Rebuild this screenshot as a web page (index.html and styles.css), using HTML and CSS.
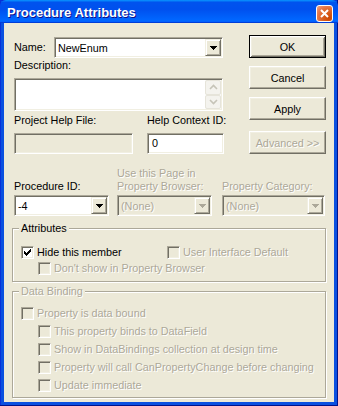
FILE: index.html
```html
<!DOCTYPE html>
<html lang="en">
<head>
  <meta charset="UTF-8" />
  <title>Procedure Attributes</title>
  <link rel="stylesheet" href="styles.css">
</head>
<body>
  <div class="window">
    <div class="titlebar">
      <span class="title">Procedure Attributes</span>
      <span class="close-btn">
        <svg width="9" height="9" viewBox="0 0 9 9"><path d="M1 1L8 8M8 1L1 8" stroke="#fff" stroke-width="2"/></svg>
      </span>
    </div>

    <div class="client">
      <div class="top">
        <div class="fields">
          <div class="name-row">
            <label class="lbl name-lbl">Name:</label>
            <div class="combo name-combo">
              <span class="combo-value">NewEnum</span>
              <span class="drop"><svg width="7" height="4" viewBox="0 0 7 4" shape-rendering="crispEdges"><path d="M0 0h7v1h-1v1h-1v1h-1v1h-1v-1h-1v-1h-1v-1h-1z"/></svg></span>
            </div>
          </div>

          <label class="lbl desc-lbl">Description:</label>
          <div class="memo">
            <div class="memo-text"></div>
            <div class="vscroll">
              <span class="sbtn"><svg width="9" height="6" viewBox="0 0 9 6"><path d="M1 5L4.5 1.5L8 5" fill="none" stroke="#c6c4b8" stroke-width="1.6"/></svg></span>
              <span class="sbtn"><svg width="9" height="6" viewBox="0 0 9 6"><path d="M1 1L4.5 4.5L8 1" fill="none" stroke="#c6c4b8" stroke-width="1.6"/></svg></span>
            </div>
          </div>

          <div class="help-row">
            <div class="help-file">
              <label class="lbl">Project Help File:</label>
              <div class="edit is-disabled"></div>
            </div>
            <div class="help-id">
              <label class="lbl">Help Context ID:</label>
              <div class="edit">0</div>
            </div>
          </div>
        </div>

        <div class="buttons">
          <button class="btn default">OK</button>
          <button class="btn">Cancel</button>
          <button class="btn">Apply</button>
          <button class="btn advanced" disabled>Advanced &gt;&gt;</button>
        </div>
      </div>

      <div class="ids-row">
        <div class="id-col col-proc">
          <label class="lbl">Procedure ID:</label>
          <div class="combo">
            <span class="combo-value">-4</span>
            <span class="drop"><svg width="7" height="4" viewBox="0 0 7 4" shape-rendering="crispEdges"><path d="M0 0h7v1h-1v1h-1v1h-1v1h-1v-1h-1v-1h-1v-1h-1z"/></svg></span>
          </div>
        </div>
        <div class="id-col col-page">
          <label class="lbl is-disabled">Use this Page in<br>Property Browser:</label>
          <div class="combo is-disabled">
            <span class="combo-value">(None)</span>
            <span class="drop"><svg width="7" height="4" viewBox="0 0 7 4" shape-rendering="crispEdges"><path d="M0 0h7v1h-1v1h-1v1h-1v1h-1v-1h-1v-1h-1v-1h-1z"/></svg></span>
          </div>
        </div>
        <div class="id-col col-cat">
          <label class="lbl is-disabled">Property Category:</label>
          <div class="combo is-disabled">
            <span class="combo-value">(None)</span>
            <span class="drop"><svg width="7" height="4" viewBox="0 0 7 4" shape-rendering="crispEdges"><path d="M0 0h7v1h-1v1h-1v1h-1v1h-1v-1h-1v-1h-1v-1h-1z"/></svg></span>
          </div>
        </div>
      </div>

      <fieldset class="group attributes">
        <legend>Attributes</legend>
        <div class="check-row">
          <div class="check hide-member">
            <span class="cb is-checked"><svg width="7" height="7" viewBox="0 0 7 7" shape-rendering="crispEdges"><path d="M6 0h1v3h-1v1h-1v1h-1v1h-1v1h-1v-1h-1v-1h-1v-3h1v1h1v1h1v-1h1v-1h1v-1h1z"/></svg></span>
            <span class="check-text">Hide this member</span>
          </div>
          <div class="check is-disabled">
            <span class="cb"></span>
            <span class="check-text">User Interface Default</span>
          </div>
        </div>
        <div class="check-row">
          <div class="check sub is-disabled">
            <span class="cb"></span>
            <span class="check-text">Don't show in Property Browser</span>
          </div>
        </div>
      </fieldset>

      <fieldset class="group binding is-disabled">
        <legend>Data Binding</legend>
        <div class="check-row tall">
          <div class="check is-disabled"><span class="cb"></span><span class="check-text">Property is data bound</span></div>
        </div>
        <div class="check-row tall">
          <div class="check sub is-disabled"><span class="cb"></span><span class="check-text">This property binds to DataField</span></div>
        </div>
        <div class="check-row tall">
          <div class="check sub is-disabled"><span class="cb"></span><span class="check-text">Show in DataBindings collection at design time</span></div>
        </div>
        <div class="check-row tall">
          <div class="check sub is-disabled"><span class="cb"></span><span class="check-text">Property will call CanPropertyChange before changing</span></div>
        </div>
        <div class="check-row tall">
          <div class="check sub is-disabled"><span class="cb"></span><span class="check-text">Update immediate</span></div>
        </div>
      </fieldset>
    </div>
  </div>
</body>
</html>
```

FILE: styles.css
```css
body {
  margin: 0;
  font-family: Tahoma, "Liberation Sans", Arial, sans-serif;
  font-size: 10.8px;
  color: #000;
  background: #ece9d8;
}
.window {
  width: 338px;
  height: 406px;
  box-sizing: border-box;
  display: flex;
  flex-direction: column;
  background: #0a50e0;
  box-shadow: inset -1px -1px #00138c, inset 1px 1px #0831d9;
}

/* title bar */
.titlebar {
  height: 23px;
  display: flex;
  align-items: flex-start;
  justify-content: space-between;
  padding: 0 5px 0 7px;
  background: linear-gradient(180deg, #0997ff, #0053ee 10%, #0050ee 40%, #0066ff 86%, #0066ff 92%, #005bff 95%, #003dd7 97%, #003dd7);
  border-radius: 6px 6px 0 0;
}
.title {
  margin-top: 5px;
  font-family: "Liberation Sans", Arial, sans-serif;
  font-weight: bold;
  font-size: 13px;
  line-height: 15px;
  color: #fff;
  text-shadow: 1px 1px #0f1089;
}
.close-btn {
  margin-top: 5px;
  width: 17px;
  height: 17px;
  box-sizing: border-box;
  border: 1px solid #fff;
  border-radius: 3px;
  background: radial-gradient(circle at 80% 80%, #cc4600 0, #dc6527 45%, #e77a4c 70%, #f0a486 100%);
  display: flex;
  align-items: center;
  justify-content: center;
}

/* client area */
.client {
  flex: 1;
  margin: 0 4px 4px;
  padding: 12px 8px 0;
  background: #ece9d8;
}
.lbl {
  display: block;
  line-height: 13px;
  white-space: nowrap;
}
.is-disabled,
.is-disabled .check-text,
.is-disabled legend {
  color: #aca899;
  text-shadow: 1px 1px #fff;
}

.top {
  display: flex;
  padding-left: 2px;
}
.fields {
  width: 210px;
  margin-top: 2px;
}
.name-row {
  display: flex;
  align-items: center;
  height: 21px;
}
.name-lbl {
  width: 40px;
}
.name-combo {
  width: 169px;
}
.desc-lbl {
  margin-top: 1px;
}

/* sunken controls */
.combo,
.edit,
.memo {
  box-sizing: border-box;
  border: 1px solid;
  border-color: #aca899 #fff #fff #aca899;
  box-shadow: inset 1px 1px #716f64, inset -1px -1px #f1efe2;
  background: #fff;
}
.combo {
  height: 21px;
  display: flex;
  align-items: center;
  padding: 1px 1px 1px 3px;
}
.combo-value {
  flex: 1;
}
.drop {
  width: 16px;
  height: 17px;
  box-sizing: border-box;
  border: 1px solid;
  border-color: #f1efe2 #716f64 #716f64 #f1efe2;
  box-shadow: inset 1px 1px #fff, inset -1px -1px #aca899;
  background: #ece9d8;
  display: flex;
  align-items: center;
  justify-content: center;
}
.combo.is-disabled {
  background: #ece9d8;
}
.combo.is-disabled svg path {
  fill: #aca899;
}

.memo {
  margin-top: 6px;
  width: 209px;
  height: 33px;
  display: flex;
  padding: 1px;
}
.memo-text {
  flex: 1;
}
.vscroll {
  width: 16px;
  display: flex;
  flex-direction: column;
  background: #fbfbf8;
}
.sbtn {
  flex: 1;
  box-sizing: border-box;
  border: 1px solid #e6e4da;
  border-radius: 2px;
  background: #f4f3ee;
  display: flex;
  align-items: center;
  justify-content: center;
}

.help-row {
  display: flex;
  margin-top: 3px;
}
.help-file {
  width: 119px;
}
.help-id {
  width: 77px;
  margin-left: 14px;
}
.edit {
  margin-top: 6px;
  height: 21px;
  padding: 3px 0 0 4px;
  line-height: 13px;
}
.edit.is-disabled {
  background: #ece9d8;
}

/* buttons */
.buttons {
  width: 77px;
  margin-left: 25px;
  display: flex;
  flex-direction: column;
}
.btn {
  height: 23px;
  margin-bottom: 8px;
  padding: 0;
  font: inherit;
  color: #000;
  background: #ece9d8;
  border: 1px solid;
  border-color: #fff #716f64 #716f64 #fff;
  box-shadow: inset -1px -1px #aca899, inset 1px 1px #f1efe2;
}
.btn.default {
  border-color: #000;
  box-shadow: inset 1px 1px #fff, inset -1px -1px #716f64, inset 2px 2px #f1efe2, inset -2px -2px #aca899;
}
.btn.advanced {
  margin-top: 3px;
  margin-bottom: 0;
  color: #aca899;
  text-shadow: 1px 1px #fff;
}

/* id combos */
.ids-row {
  display: flex;
  align-items: flex-end;
  margin-top: 13px;
  padding-left: 2px;
}
.id-col .lbl {
  margin-bottom: 2px;
}
.col-proc {
  width: 95px;
}
.col-page {
  width: 95px;
  margin-left: 8px;
}
.col-cat {
  width: 103px;
  margin-left: 10px;
}

/* group boxes */
.group {
  margin: 6px 0 0;
  padding: 9px 0 5px 8px;
  min-width: 0;
  border: 1px solid #aca899;
  box-shadow: inset 1px 1px #fff, 1px 1px #fff;
}
.group legend {
  padding: 0 2px;
  margin-left: -2px;
  line-height: 13px;
  background: #ece9d8;
}
.group.binding {
  margin-top: 3px;
  padding: 6px 0 3px 8px;
  text-shadow: none;
}
.check-row {
  display: flex;
  align-items: center;
  height: 16px;
}
.check-row.tall {
  height: 18px;
}
.check {
  display: flex;
  align-items: center;
}
.hide-member {
  width: 146px;
}
.check.sub {
  margin-left: 17px;
}
.cb {
  width: 13px;
  height: 13px;
  box-sizing: border-box;
  border: 1px solid;
  border-color: #aca899 #fff #fff #aca899;
  box-shadow: inset 1px 1px #716f64, inset -1px -1px #f1efe2;
  background: #ece9d8;
  display: flex;
  align-items: center;
  justify-content: center;
}
.cb.is-checked {
  background: #fff;
}
.check-text {
  margin-left: 3px;
  line-height: 13px;
}
```
